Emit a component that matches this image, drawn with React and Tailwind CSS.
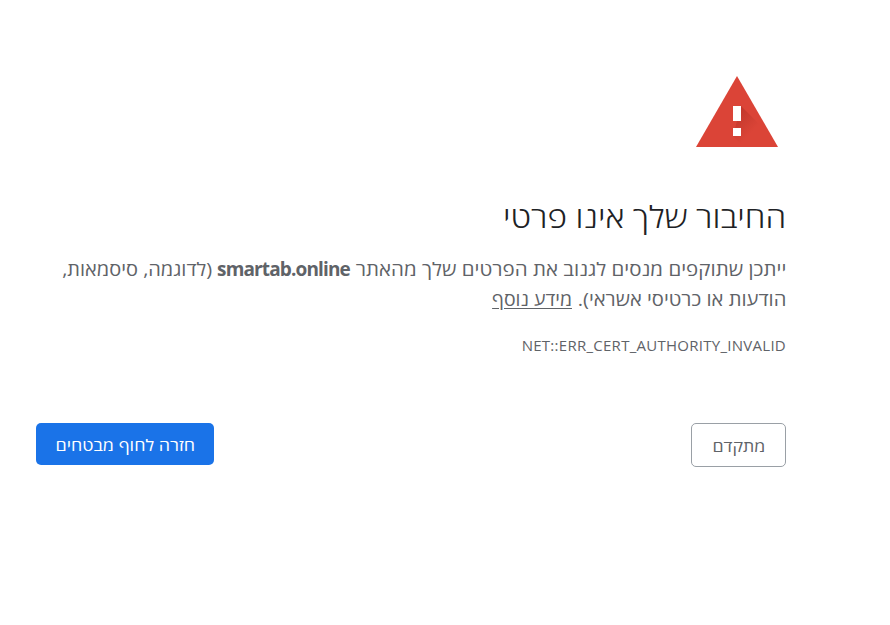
export default function App() {
  return (
    <main dir="rtl" className="h-[625px] w-[890px] overflow-hidden bg-white pr-[104px] pl-9 pt-[76px] font-['Open_Sans','Noto_Sans',sans-serif] text-[#5f6368]">
      <svg className="mr-2 h-[71px] w-[82px]" viewBox="0 0 82 71">
        <defs>
          <linearGradient id="shade" x1="0" y1="0" x2="1" y2="1">
            <stop offset="0" stopColor="#b93429" />
            <stop offset=".55" stopColor="#db4437" />
          </linearGradient>
        </defs>
        <path d="M41 0 82 71H0Z" fill="#db4437" />
        <path d="M45 30 65 50 77 71H48L37 60Z" fill="url(#shade)" />
        <path d="M37 30h8v15h-8zM37 52h8v8h-8z" fill="#fff" />
      </svg>
      <h1 className="mt-[47px] h-[46px] text-[30px] font-[350] leading-[46px] text-[#202124]"><span className="inline-block origin-right scale-x-[1.11] whitespace-nowrap">החיבור שלך אינו פרטי</span></h1>
      <div className="mt-[14px] whitespace-nowrap text-[18px] leading-[30px]">
        <p className="flex">
          <span className="w-[436px] shrink-0"><span className="inline-block origin-right scale-x-[1.138]">ייתכן שתוקפים מנסים לגנוב את הפרטים שלך מהאתר</span></span>
          <strong className="w-[138px] shrink-0 text-[19px] tracking-[-0.86px]">smartab.online</strong>
          <span className="inline-block origin-right scale-x-[1.11]">(לדוגמה, סיסמאות,</span>
        </p>
        <p className="flex">
          <span className="w-[214px] shrink-0"><span className="inline-block origin-right scale-x-[1.12]">הודעות או כרטיסי אשראי).</span></span>
          <a className="inline-block origin-right scale-x-[1.08] underline underline-offset-2">מידע נוסף</a>
        </p>
      </div>
      <p className="mt-[19px] text-[15px] leading-[24px] tracking-[0.27px]"><bdi>NET::ERR_CERT_AUTHORITY_INVALID</bdi></p>
      <div className="mt-[66px] flex items-start justify-between text-[16px]">
        <button className="h-11 w-[95px] rounded-[5px] border border-[#9aa0a6] pt-px"><span className="inline-block scale-x-[1.11]">מתקדם</span></button>
        <button className="h-[42px] w-[178px] rounded-[5px] bg-[#1a73e8] pt-px text-white"><span className="inline-block scale-x-[1.12]">חזרה לחוף מבטחים</span></button>
      </div>
    </main>
  );
}
